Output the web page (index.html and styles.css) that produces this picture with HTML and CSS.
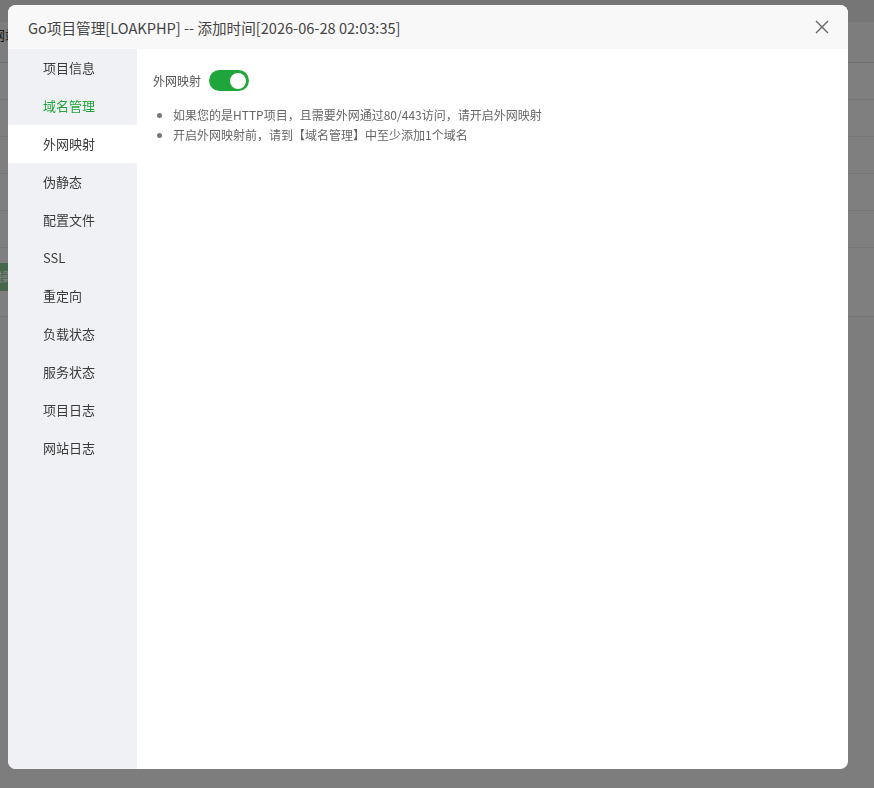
FILE: index.html
```html
<!DOCTYPE html>
<html lang="zh-CN">
<head>
    <meta charset="UTF-8">
    <meta name="viewport" content="width=device-width, initial-scale=1.0">
    <title>Go项目管理</title>
    <link rel="stylesheet" href="styles.css">
</head>
<body>
    <!-- site list behind the dialog -->
    <div class="page">
        <div class="page-top"></div>
        <div class="page-head">网站</div>
        <div class="page-row"></div>
        <div class="page-row"></div>
        <div class="page-row"></div>
        <div class="page-row"></div>
        <div class="page-row"></div>
        <div class="page-row page-row-btn"><span class="btn-green">操作</span></div>
    </div>

    <div class="mask"></div>

    <div class="dialog">
        <div class="dialog-title">
            <span>Go项目管理[LOAKPHP] -- 添加时间[2026-06-28 02:03:35]</span>
            <svg class="dialog-close" width="14" height="14" viewBox="0 0 14 14">
                <path d="M1 1L13 13M13 1L1 13" stroke="#666" stroke-width="1.4" fill="none"/>
            </svg>
        </div>
        <div class="dialog-body">
            <ul class="side-menu">
                <li>项目信息</li>
                <li class="hover">域名管理</li>
                <li class="active">外网映射</li>
                <li>伪静态</li>
                <li>配置文件</li>
                <li>SSL</li>
                <li>重定向</li>
                <li>负载状态</li>
                <li>服务状态</li>
                <li>项目日志</li>
                <li>网站日志</li>
            </ul>
            <div class="main">
                <div class="form-line">
                    <span class="form-label">外网映射</span>
                    <span class="switch on"><span class="switch-knob"></span></span>
                </div>
                <ul class="help-list">
                    <li>如果您的是HTTP项目，且需要外网通过80/443访问，请开启外网映射</li>
                    <li>开启外网映射前，请到【域名管理】中至少添加1个域名</li>
                </ul>
            </div>
        </div>
    </div>
</body>
</html>
```

FILE: styles.css
```css
* {
    box-sizing: border-box;
}

body {
    margin: 0;
    font-family: "Microsoft YaHei", "Noto Sans CJK SC", "Liberation Sans", sans-serif;
    background: #fafafa;
    height: 788px;
    overflow: hidden;
}

/* page behind the mask */
.page {
    display: flex;
    flex-direction: column;
}

.page-top {
    height: 22px;
    background: #ececec;
}

.page-head {
    height: 41px;
    line-height: 26px;
    font-size: 13px;
    color: #333;
    margin-left: -8px;
    border-bottom: 1px solid #e4e4e4;
}

.page-row {
    height: 37px;
    border-bottom: 1px solid #ebebeb;
    background: #fff;
}

.page-row-btn {
    height: 69px;
    padding-top: 15px;
}

.btn-green {
    display: inline-block;
    margin-left: -10px;
    height: 28px;
    line-height: 28px;
    padding: 0 8px;
    font-size: 12px;
    color: #fff;
    background: #8fcf9b;
}

.mask {
    position: fixed;
    inset: 0;
    background: rgba(0, 0, 0, 0.5);
}

/* dialog */
.dialog {
    position: fixed;
    left: 8px;
    top: 5px;
    width: 840px;
    height: 764px;
    background: #fff;
    border-radius: 8px;
    overflow: hidden;
    display: flex;
    flex-direction: column;
}

.dialog-title {
    height: 44px;
    flex-shrink: 0;
    background: #f8f8f8;
    display: flex;
    align-items: center;
    justify-content: space-between;
    padding: 0 19px 0 20px;
    font-size: 14.6px;
    color: #444;
}

.dialog-close {
    display: block;
}

.dialog-body {
    flex: 1;
    display: flex;
}

.side-menu {
    width: 129px;
    margin: 0;
    padding: 0;
    list-style: none;
    background: #f0f1f5;
}

.side-menu li {
    height: 38px;
    line-height: 38px;
    padding-left: 35px;
    font-size: 13px;
    color: #3a3a3a;
}

.side-menu li.hover {
    color: #20a53a;
}

.side-menu li.active {
    background: #fff;
}

.main {
    flex: 1;
    padding: 21px 16px;
}

.form-line {
    display: flex;
    align-items: center;
    gap: 8px;
    height: 21px;
}

.form-label {
    font-size: 12px;
    color: #555;
}

.switch {
    width: 40px;
    height: 21px;
    border-radius: 11px;
    background: #ccc;
    display: flex;
    align-items: center;
    padding: 0 3px;
}

.switch.on {
    background: #20a53a;
    justify-content: flex-end;
}

.switch-knob {
    width: 16px;
    height: 16px;
    border-radius: 50%;
    background: #fff;
}

.help-list {
    margin: 14px 0 0;
    padding-left: 20px;
    font-size: 12px;
    line-height: 20px;
    color: #666;
}

.help-list li::marker {
    color: #777;
}
```
